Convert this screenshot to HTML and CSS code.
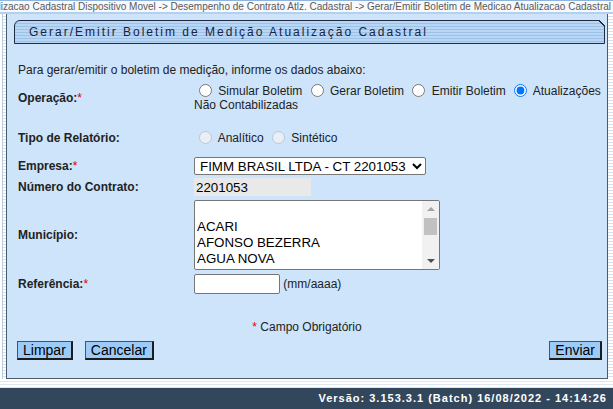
FILE: index.html
```html
<!DOCTYPE html>
<html lang="pt-BR">
<head>
    <meta charset="UTF-8">
    <meta name="viewport" content="width=device-width, initial-scale=1.0">
    <title>Gerar/Emitir Boletim de Medição Atualização Cadastral</title>
    <link rel="stylesheet" href="styles.css">
</head>
<body>
<div class="breadcrumb">
    <span>Gerencial -&gt; Atualizacao Cadastral Dispositivo Movel -&gt; Desempenho de Contrato Atlz. Cadastral -&gt; Gerar/Emitir Boletim de Medicao Atualizacao Cadastral</span>
</div>

<div class="frame">
    <div class="side side-left"></div>

    <form class="panel">
        <div class="title-box">Gerar/Emitir Boletim de Medição Atualização Cadastral</div>

        <p class="intro">Para gerar/emitir o boletim de medição, informe os dados abaixo:</p>

        <!-- Operação -->
        <div class="row row-op">
            <label class="label">Operação:<span class="req">*</span></label>
            <div class="value radios">
                <input type="radio" name="operacao"> Simular Boletim
                <input type="radio" name="operacao"> Gerar Boletim
                <input type="radio" name="operacao"> Emitir Boletim
                <input type="radio" name="operacao" checked> Atualizações Não Contabilizadas
            </div>
        </div>

        <!-- Tipo de Relatório -->
        <div class="row row-tipo">
            <label class="label">Tipo de Relatório:</label>
            <div class="value radios">
                <input type="radio" name="tipo" disabled> Analítico
                <input type="radio" name="tipo" disabled> Sintético
            </div>
        </div>

        <!-- Empresa -->
        <div class="row row-empresa">
            <label class="label">Empresa:<span class="req">*</span></label>
            <div class="value">
                <select class="combo">
                    <option>FIMM BRASIL LTDA - CT 2201053</option>
                </select>
            </div>
        </div>

        <!-- Contrato -->
        <div class="row row-contrato">
            <label class="label">Número do Contrato:</label>
            <div class="value">
                <input class="readonly" type="text" value="2201053" readonly>
            </div>
        </div>

        <!-- Município -->
        <div class="row row-municipio">
            <label class="label">Município:</label>
            <div class="value">
                <div class="listbox" role="listbox">
                    <ul class="options">
                        <li>&nbsp;</li>
                        <li>ACARI</li>
                        <li>AFONSO BEZERRA</li>
                        <li>AGUA NOVA</li>
                    </ul>
                    <div class="scrollbar">
                        <span class="arrow"><i class="tri tri-up"></i></span>
                        <span class="thumb"></span>
                        <span class="track"></span>
                        <span class="arrow"><i class="tri tri-down"></i></span>
                    </div>
                </div>
            </div>
        </div>

        <!-- Referência -->
        <div class="row row-ref">
            <label class="label">Referência:<span class="req">*</span></label>
            <div class="value">
                <input class="text-ref" type="text"> <span class="hint">(mm/aaaa)</span>
            </div>
        </div>

        <p class="required-note"><span class="req">*</span> Campo Obrigatório</p>

        <div class="buttons">
            <button type="button" class="btn">Limpar</button>
            <button type="button" class="btn">Cancelar</button>
            <button type="button" class="btn btn-send">Enviar</button>
        </div>
    </form>

    <div class="side side-right"></div>
</div>

<div class="bottom-stripes"></div>

<div class="footer">Versão: 3.153.3.1 (Batch) 16/08/2022 - 14:14:26</div>
</body>
</html>
```

FILE: styles.css
```css
body {
    margin: 0;
    font-family: "Liberation Sans", Arial, sans-serif;
    font-size: 12px;
    color: #222;
    background-color: #ffffff;
}

/* top path bar */
.breadcrumb {
    height: 11px;
    display: flex;
    justify-content: flex-end;
    overflow: hidden;
    white-space: nowrap;
    padding-right: 2px;
    border-top: 1px solid #8fb4dc;
    border-bottom: 2px solid #b4d0ee;
    background-color: #f7f9fc;
    font-size: 10px;
    line-height: 11px;
    color: #5a5a5a;
}

.frame {
    display: flex;
}

.side {
    background: repeating-linear-gradient(to bottom, #ffffff 0, #ffffff 2px, #d3e1ef 2px, #d3e1ef 3px);
}
.side-left {
    width: 6px;
    box-shadow: inset 2px 0 0 #ffffff, inset 3px 0 0 #b8cce0;
}
.side-right {
    width: 5px;
}

.panel {
    flex: 1;
    margin: 0;
    padding: 6px 0 18px 0;
    background-color: #cde4fb;
    border-left: 1px solid #4b5b6c;
    border-right: 1px solid #4b5b6c;
    border-bottom: 1px solid #4b5b6c;
}

.title-box {
    position: relative;
    height: 22px;
    margin: 0 2px 0 7px;
    padding-left: 14px;
    border: 1px solid #1d2b45;
    border-radius: 6px 0 0 0;
    background: repeating-linear-gradient(to bottom, #b9d6f5 0, #b9d6f5 2px, #9cc2ea 2px, #9cc2ea 3px);
    font-size: 12px;
    line-height: 22px;
    letter-spacing: 2px;
    color: #17243d;
}
.title-box::after {
    content: "";
    position: absolute;
    top: -1px;
    right: -1px;
    width: 6px;
    height: 6px;
    background: linear-gradient(to top right, transparent calc(50% - 1px), #1d2b45 calc(50% - 1px), #1d2b45 calc(50% + 0.5px), #cde4fb calc(50% + 0.5px));
}

.intro {
    margin: 18px 0 0 11px;
    line-height: 16px;
}

.row {
    display: grid;
    grid-template-columns: 176px 1fr;
    align-items: center;
    padding-left: 11px;
}
.label {
    font-weight: bold;
    color: #222;
}
.req {
    color: #e00000;
    font-weight: normal;
}
.value {
    line-height: 14px;
}
.radios input {
    margin: 0 3px 0 5px;
    vertical-align: -2px;
}

.row-op { margin-top: 6px; height: 28px; }
.row-tipo { margin-top: 18px; height: 16px; }
.row-empresa { margin-top: 10px; height: 20px; }
.row-contrato { margin-top: 2px; height: 18px; }
.row-municipio { margin-top: 4px; height: 70px; }
.row-ref { margin-top: 4px; height: 20px; }

.combo, .listbox, .readonly, .text-ref {
    font-family: "Liberation Sans", Arial, sans-serif;
    font-size: 13.33px;
    color: #000;
}
.combo {
    display: block;
    width: 232px;
    height: 18px;
    padding: 0 0 0 1px;
    background-color: #ffffff;
    border: 1px solid #767676;
    border-radius: 2px;
}
.readonly {
    display: block;
    box-sizing: border-box;
    width: 117px;
    height: 18px;
    padding: 0 2px;
    border: none;
    background-color: #e9e9e9;
    outline: none;
}

/* Município list */
.listbox {
    display: flex;
    box-sizing: border-box;
    width: 246px;
    height: 70px;
    border: 1px solid #767676;
    border-radius: 2px;
    background-color: #ffffff;
    overflow: hidden;
}
.options {
    flex: 1;
    margin: 0;
    padding: 2px 0 0 0;
    list-style: none;
}
.options li {
    height: 16px;
    padding: 0 2px;
    line-height: 16px;
    white-space: nowrap;
}
.scrollbar {
    width: 17px;
    display: flex;
    flex-direction: column;
    background-color: #f1f1f1;
}
.arrow {
    height: 16px;
    display: flex;
    align-items: center;
    justify-content: center;
}
.tri {
    width: 0;
    height: 0;
    border-left: 4px solid transparent;
    border-right: 4px solid transparent;
}
.tri-up {
    border-bottom: 4px solid #a3a3a3;
}
.tri-down {
    border-top: 4px solid #505050;
}
.thumb {
    height: 17px;
    margin: 1px 2px 0 2px;
    background-color: #c1c1c1;
}
.track {
    flex: 1;
}

.text-ref {
    box-sizing: border-box;
    width: 86px;
    height: 20px;
    border: 1px solid #767676;
    border-radius: 2px;
    background-color: #ffffff;
    vertical-align: middle;
}
.hint {
    vertical-align: middle;
    color: #222;
}

.required-note {
    margin: 25px 0 0 0;
    text-align: center;
    line-height: 16px;
}

.buttons {
    display: flex;
    gap: 12px;
    margin-top: 6px;
    padding: 0 5px 0 10px;
}
.btn {
    height: 19px;
    padding: 0 5px;
    font-family: "Liberation Sans", Arial, sans-serif;
    font-size: 14px;
    line-height: 15px;
    color: #000;
    background-color: #9ccbf8;
    border-style: solid;
    border-width: 1px 2px 2px 1px;
    border-color: #3d5572 #1c1c1c #1c1c1c #3d5572;
    cursor: pointer;
}
.btn-send {
    margin-left: auto;
}

.bottom-stripes {
    height: 9px;
    background: repeating-linear-gradient(to bottom, #ffffff 0, #ffffff 2px, #dce7f2 2px, #dce7f2 3px);
}

.footer {
    height: 22px;
    padding-right: 6px;
    background-color: #33475c;
    color: #ffffff;
    font-size: 11px;
    font-weight: bold;
    letter-spacing: 1px;
    line-height: 21px;
    text-align: right;
}
```
